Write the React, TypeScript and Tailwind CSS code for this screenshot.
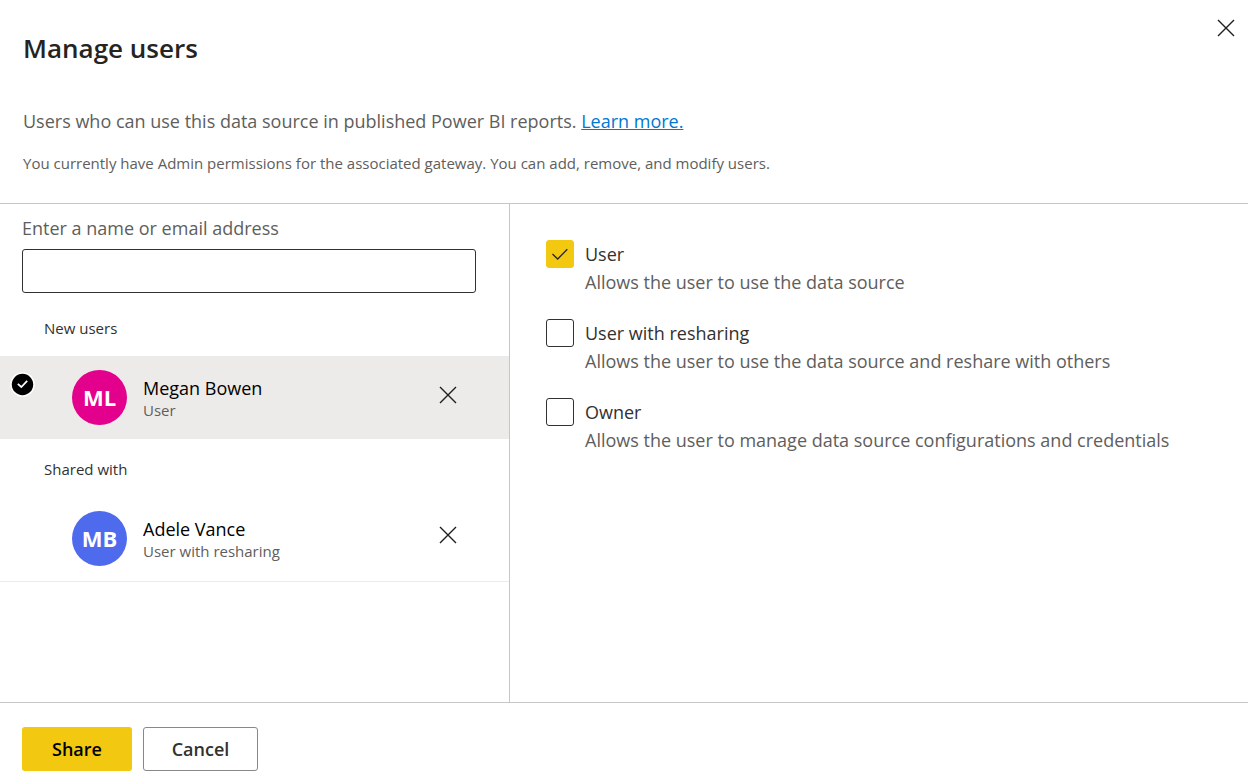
import { useState } from "react";

type Person = {
  initials: string;
  name: string;
  role: string;
  color: string;
  selected?: boolean;
};

const newUsers: Person[] = [
  { initials: "ML", name: "Megan Bowen", role: "User", color: "bg-[#e3008c]", selected: true },
];

const sharedWith: Person[] = [
  { initials: "MB", name: "Adele Vance", role: "User with resharing", color: "bg-[#4f6bed]" },
];

const permissions = [
  { id: "user", label: "User", hint: "Allows the user to use the data source" },
  {
    id: "reshare",
    label: "User with resharing",
    hint: "Allows the user to use the data source and reshare with others",
  },
  {
    id: "owner",
    label: "Owner",
    hint: "Allows the user to manage data source configurations and credentials",
  },
];

function CloseIcon() {
  return (
    <svg viewBox="0 0 18 18" className="size-[18px]" fill="none" stroke="currentColor" strokeWidth="1.4">
      <path d="M1 1L17 17M17 1L1 17" />
    </svg>
  );
}

function UserRow({ person }: { person: Person }) {
  return (
    <li
      className={
        person.selected
          ? "flex h-[83px] items-center bg-[#edebe9] pl-[10px] pr-[52px]"
          : "flex h-[86px] items-center border-b border-[#edebe9] pl-[10px] pr-[52px]"
      }
    >
      {/* Selection mark */}
      <div className="w-[62px] shrink-0 self-start pt-4">
        {person.selected && (
          <svg viewBox="0 0 25 25" className="size-[25px]" fill="none">
            <circle cx="12.5" cy="12.5" r="12.3" fill="#fff" />
            <circle cx="12.5" cy="12.5" r="10.7" fill="#000" />
            <path d="M7.8 11.8L11.3 15L17.2 8.8" stroke="#fff" strokeWidth="1.7" />
          </svg>
        )}
      </div>

      <div
        className={`flex size-[55px] shrink-0 items-center justify-center rounded-full text-[22px] font-bold text-white ${person.color}`}
      >
        {person.initials}
      </div>

      <div className="ml-4 min-w-0 flex-1">
        <div className="text-[18px] leading-6 text-black">{person.name}</div>
        <div className="text-[15px] leading-5 text-[#605e5c]">{person.role}</div>
      </div>

      <button type="button" aria-label={`Remove ${person.name}`} className="mt-[30px] self-start text-[#201f1e]">
        <CloseIcon />
      </button>
    </li>
  );
}

export default function App() {
  const [checked, setChecked] = useState("user");

  return (
    <div className="flex min-h-screen flex-col bg-white font-['Open_Sans',sans-serif] text-[#323130]">
      {/* Header */}
      <header className="flex items-start justify-between border-b border-[#c8c6c4] pl-[23px] pr-[13px] pb-7">
        <div className="pt-[31px]">
          <h1 className="text-[26px] leading-[34px] font-semibold text-[#252423]">Manage users</h1>
          <p className="mt-[42px] text-[18px] leading-7 text-[#605e5c]">
            Users who can use this data source in published Power BI reports.{" "}
            <a href="#learn-more" className="text-[#0078d4] underline">
              Learn more.
            </a>
          </p>
          <p className="mt-4 text-[15px] leading-6 text-[#605e5c]">
            You currently have Admin permissions for the associated gateway. You can add, remove, and modify users.
          </p>
        </div>
        <button type="button" aria-label="Close" className="mt-[19px] text-[#201f1e]">
          <CloseIcon />
        </button>
      </header>

      <main className="flex flex-1">
        {/* People */}
        <section className="w-[41%] max-w-[510px] border-r border-[#c8c6c4] pt-[10px]">
          <div className="pl-[22px] pr-[33px]">
            <label htmlFor="email" className="block text-[18px] leading-7 text-[#605e5c]">
              Enter a name or email address
            </label>
            <input
              id="email"
              type="text"
              className="mt-[7px] block h-11 w-full rounded-[3px] border border-[#323130] px-3 text-[18px]"
            />
          </div>

          <h2 className="mt-[7px] py-4 pl-11 text-[15px] leading-6 text-[#323130]">New users</h2>
          <ul>
            {newUsers.map((person) => (
              <UserRow key={person.name} person={person} />
            ))}
          </ul>

          <h2 className="pt-[18px] pb-[15px] pl-11 text-[15px] leading-6 text-[#323130]">Shared with</h2>
          <ul>
            {sharedWith.map((person) => (
              <UserRow key={person.name} person={person} />
            ))}
          </ul>
        </section>

        {/* Permissions */}
        <section className="flex flex-1 flex-col gap-[23px] px-9 pt-9">
          {permissions.map((item) => (
            <div key={item.id} className="flex gap-[11px]">
              <div className="relative size-7 shrink-0">
                <input
                  id={item.id}
                  type="checkbox"
                  checked={checked === item.id}
                  onChange={() => setChecked(item.id)}
                  aria-describedby={`${item.id}-hint`}
                  className="block size-7 appearance-none rounded-[3px] border border-[#323130] checked:border-[#f2c811] checked:bg-[#f2c811]"
                />
                {checked === item.id && (
                  <svg
                    viewBox="0 0 28 28"
                    className="pointer-events-none absolute inset-0 size-7"
                    fill="none"
                    stroke="#252423"
                    strokeWidth="1.3"
                  >
                    <path d="M6.5 14L11.7 19L21.3 9.2" />
                  </svg>
                )}
              </div>
              <div className="text-[18px] leading-7">
                <label htmlFor={item.id} className="block">
                  {item.label}
                </label>
                <p id={`${item.id}-hint`} className="text-[#605e5c]">
                  {item.hint}
                </p>
              </div>
            </div>
          ))}
        </section>
      </main>

      {/* Actions */}
      <footer className="flex gap-[11px] border-t border-[#c8c6c4] px-[22px] pt-6 pb-[9px]">
        <button
          type="button"
          className="h-11 w-[110px] rounded-[3px] bg-[#f2c811] text-[18px] font-semibold text-black"
        >
          Share
        </button>
        <button
          type="button"
          className="h-11 w-[115px] rounded-[3px] border border-[#8a8886] text-[18px] font-semibold text-[#323130]"
        >
          Cancel
        </button>
      </footer>
    </div>
  );
}
